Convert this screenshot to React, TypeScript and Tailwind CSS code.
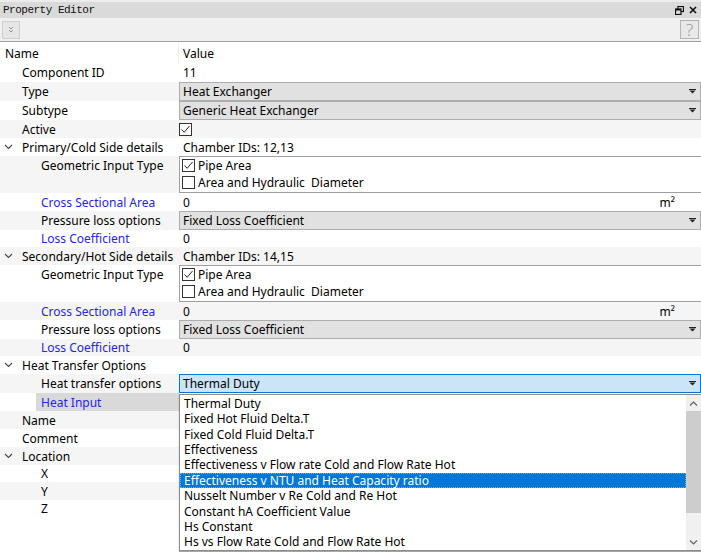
import React from 'react'

type Value =
  | { kind: 'none' }
  | { kind: 'text'; text: string; unit?: string }
  | { kind: 'combo'; text: string; active?: boolean }
  | { kind: 'check' }
  | { kind: 'geo' }

interface Row {
  label: string
  level: 1 | 2
  h: string
  value: Value
  expand?: boolean
  blue?: boolean
  selected?: boolean
}

const rows: Row[] = [
  { label: 'Component ID', level: 1, h: 'h-[19px]', value: { kind: 'text', text: '11' } },
  { label: 'Type', level: 1, h: 'h-[19px]', value: { kind: 'combo', text: 'Heat Exchanger' } },
  { label: 'Subtype', level: 1, h: 'h-[19px]', value: { kind: 'combo', text: 'Generic Heat Exchanger' } },
  { label: 'Active', level: 1, h: 'h-[18px]', value: { kind: 'check' } },
  { label: 'Primary/Cold Side details', level: 1, h: 'h-[18px]', expand: true, value: { kind: 'text', text: 'Chamber IDs: 12,13' } },
  { label: 'Geometric Input Type', level: 2, h: 'h-[37px]', value: { kind: 'geo' } },
  { label: 'Cross Sectional Area', level: 2, h: 'h-[18px]', blue: true, value: { kind: 'text', text: '0', unit: 'm²' } },
  { label: 'Pressure loss options', level: 2, h: 'h-[19px]', value: { kind: 'combo', text: 'Fixed Loss Coefficient' } },
  { label: 'Loss Coefficient', level: 2, h: 'h-[17px]', blue: true, value: { kind: 'text', text: '0' } },
  { label: 'Secondary/Hot Side details', level: 1, h: 'h-[18px]', expand: true, value: { kind: 'text', text: 'Chamber IDs: 14,15' } },
  { label: 'Geometric Input Type', level: 2, h: 'h-[37px]', value: { kind: 'geo' } },
  { label: 'Cross Sectional Area', level: 2, h: 'h-[18px]', blue: true, value: { kind: 'text', text: '0', unit: 'm²' } },
  { label: 'Pressure loss options', level: 2, h: 'h-[19px]', value: { kind: 'combo', text: 'Fixed Loss Coefficient' } },
  { label: 'Loss Coefficient', level: 2, h: 'h-[17px]', blue: true, value: { kind: 'text', text: '0' } },
  { label: 'Heat Transfer Options', level: 1, h: 'h-[18px]', expand: true, value: { kind: 'none' } },
  { label: 'Heat transfer options', level: 2, h: 'h-[19px]', value: { kind: 'combo', text: 'Thermal Duty', active: true } },
  { label: 'Heat Input', level: 2, h: 'h-[18px]', blue: true, selected: true, value: { kind: 'none' } },
  { label: 'Name', level: 1, h: 'h-[18px]', value: { kind: 'none' } },
  { label: 'Comment', level: 1, h: 'h-[18px]', value: { kind: 'none' } },
  { label: 'Location', level: 1, h: 'h-[18px]', expand: true, value: { kind: 'none' } },
  { label: 'X', level: 2, h: 'h-[17px]', value: { kind: 'none' } },
  { label: 'Y', level: 2, h: 'h-[18px]', value: { kind: 'none' } },
  { label: 'Z', level: 2, h: 'h-[17px]', value: { kind: 'none' } },
]

const options = [
  'Thermal Duty',
  'Fixed Hot Fluid Delta.T',
  'Fixed Cold Fluid Delta.T',
  'Effectiveness',
  'Effectiveness v Flow rate Cold and Flow Rate Hot',
  'Effectiveness v NTU and Heat Capacity ratio',
  'Nusselt Number v Re Cold and Re Hot',
  'Constant hA Coefficient Value',
  'Hs Constant',
  'Hs vs Flow Rate Cold and Flow Rate Hot',
]

function Arrow() {
  return (
    <svg width="7" height="5" viewBox="0 0 7 5" className="shrink-0">
      <rect x="0" y="0" width="7" height="1" fill="#222" />
      <path d="M0.5 1.5 L6.5 1.5 L3.5 4.5 Z" fill="#222" />
    </svg>
  )
}

function Chevron() {
  return (
    <svg width="9" height="6" viewBox="0 0 9 6" className="absolute left-[4px] top-1/2 -translate-y-1/2">
      <path d="M1 1 L4.5 4.5 L8 1" fill="none" stroke="#444" strokeWidth="1.1" />
    </svg>
  )
}

function CheckBox({ checked }: { checked: boolean }) {
  return (
    <span className="w-[13px] h-[13px] border border-[#333] bg-white flex items-center justify-center shrink-0">
      {checked && (
        <svg width="11" height="11" viewBox="0 0 11 11">
          <path d="M1.5 5.5 L4.2 8.3 L9.5 2" fill="none" stroke="#222" strokeWidth="1" />
        </svg>
      )}
    </span>
  )
}

function ValueCell({ value }: { value: Value }) {
  switch (value.kind) {
    case 'text':
      return (
        <div className="flex items-center h-full pl-[4px] pr-[26px] pt-[1px]">
          <span className="flex-1">{value.text}</span>
          {value.unit && <span>{value.unit}</span>}
        </div>
      )
    case 'combo':
      return (
        <div
          className={
            value.active
              ? 'flex items-center h-full pl-[3px] pr-[4px] bg-[#cce4f7] border border-[#0078d7]'
              : 'flex items-center h-full pl-[3px] pr-[4px] bg-[#e1e1e1] border border-[#adadad]'
          }
        >
          <span className="flex-1 pt-[1px]">{value.text}</span>
          <Arrow />
        </div>
      )
    case 'check':
      return (
        <div className="flex items-center h-full">
          <CheckBox checked />
        </div>
      )
    case 'geo':
      return (
        <div className="h-full bg-white border border-[#a0a0a0] border-r-0 pl-[2px] pt-[2px] flex flex-col gap-[4px]">
          <label className="flex items-center gap-[3px] h-[13px]">
            <CheckBox checked />
            <span className="pt-[1px]">Pipe Area</span>
          </label>
          <label className="flex items-center gap-[3px] h-[13px]">
            <CheckBox checked={false} />
            <span className="pt-[1px]">Area and Hydraulic&nbsp; Diameter</span>
          </label>
        </div>
      )
    default:
      return null
  }
}

export default function App() {
  return (
    <div
      className="relative w-[701px] h-[552px] overflow-hidden bg-white text-black text-[12px] leading-none"
      style={{ fontFamily: '"Noto Sans", "Open Sans", sans-serif' }}
    >
      {/* title bar */}
      <div className="h-[18px] bg-[#dadada] border-t-2 border-[#ececec] flex items-center pl-[3px] pr-[4px]">
        <span
          className="flex-1 text-[11px] tracking-[-0.5px] text-[#111] pt-[1px]"
          style={{ fontFamily: '"Liberation Mono", monospace' }}
        >
          Property Editor
        </span>
        <svg width="9" height="9" viewBox="0 0 9 9" className="mr-[5px]">
          <rect x="3" y="0.5" width="5.5" height="5" fill="none" stroke="#111" strokeWidth="1.2" />
          <rect x="0.5" y="3" width="5.5" height="5.5" fill="#dadada" stroke="#111" strokeWidth="1.2" />
          <rect x="0.5" y="3" width="5.5" height="1.5" fill="#111" />
        </svg>
        <svg width="8" height="8" viewBox="0 0 8 8">
          <path d="M1 1 L7 7 M7 1 L1 7" stroke="#111" strokeWidth="1.6" />
        </svg>
      </div>

      {/* toolbar */}
      <div className="h-[24px] bg-[#f0f0f0] border-b border-[#a0a0a0] flex items-center justify-between pl-[2px] pr-[2px]">
        <div className="w-[18px] h-[18px] bg-[#e6e6e6] border border-[#cfcfcf] flex items-center justify-center">
          <svg width="6" height="7" viewBox="0 0 6 7">
            <path d="M1 1 L3 3 L5 1 M1 4 L3 6 L5 4" fill="none" stroke="#888" strokeWidth="0.9" />
          </svg>
        </div>
        <div className="w-[19px] h-[19px] bg-[#e8e8e8] border border-[#b4b4b4] flex items-center justify-center text-[17px] text-[#999] font-light">
          ?
        </div>
      </div>

      {/* tree */}
      <div className="flex flex-col">
        <div className="h-[21px] flex items-center">
          <div className="w-[179px] pl-[5px] pt-[3px] border-r border-[#f0f0f0] h-full flex items-center">Name</div>
          <div className="pl-[4px] pt-[3px]">Value</div>
        </div>
        {rows.map((r, i) => (
          <div key={i} className={(i % 2 === 1 ? 'bg-[#f5f5f5] ' : 'bg-white ') + r.h + ' flex'}>
            <div className={r.level === 1 ? 'relative w-[179px] shrink-0 pl-[22px]' : 'relative w-[179px] shrink-0 pl-[36px]'}>
              {r.expand && <Chevron />}
              <div
                className={
                  (r.selected ? 'bg-[#d9d9d9] ' : '') +
                  (r.value.kind === 'geo' ? 'pt-[4px] items-start ' : 'items-center pt-[1px] ') +
                  (r.level === 2 ? 'pl-[5px] ' : '') +
                  (r.blue ? 'text-[#2424f0] ' : '') +
                  'h-full flex whitespace-nowrap'
                }
              >
                {r.label}
              </div>
            </div>
            <div className="flex-1 min-w-0">
              <ValueCell value={r.value} />
            </div>
          </div>
        ))}
      </div>

      {/* open combo list */}
      <div className="absolute left-[179px] top-[394px] w-[522px] h-[157px] bg-white border border-[#8c8c8c] border-r-0 shadow-[0_1px_1px_rgba(0,0,0,0.35)] flex">
        <div className="flex-1 flex flex-col pt-[1px]">
          {options.map((o, i) =>
            i === 5 ? (
              <div key={o} className="h-[15.5px] flex items-center pl-[3px] bg-[#0078d7] text-white border border-dotted border-[#8aa]">
                {o}
              </div>
            ) : (
              <div key={o} className="h-[15.5px] flex items-center pl-[4px]">
                {o}
              </div>
            ),
          )}
        </div>
        <div className="w-[15px] bg-[#f0f0f0] flex flex-col">
          <div className="h-[16px] flex items-center justify-center">
            <svg width="9" height="5" viewBox="0 0 9 5">
              <path d="M1 4.5 L4.5 1 L8 4.5" fill="none" stroke="#606060" strokeWidth="1.2" />
            </svg>
          </div>
          <div className="h-[102px] bg-[#cdcdcd]" />
          <div className="flex-1 flex items-end justify-center pb-[5px]">
            <svg width="9" height="5" viewBox="0 0 9 5">
              <path d="M1 0.5 L4.5 4 L8 0.5" fill="none" stroke="#606060" strokeWidth="1.2" />
            </svg>
          </div>
        </div>
      </div>
    </div>
  )
}
